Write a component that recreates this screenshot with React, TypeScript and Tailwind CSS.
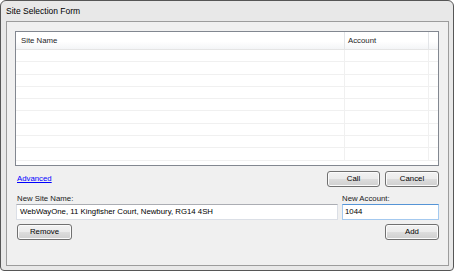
import React from "react";

const rows = Array.from({ length: 9 });

function Btn({ label, w }: { label: string; w: string }) {
  return (
    <button
      className={`${w} h-[16px] rounded-[3px] border border-[#707070] bg-[linear-gradient(#f2f2f2_0%,#ebebeb_50%,#dddddd_51%,#cfcfcf_100%)] shadow-[inset_0_0_0_1px_#fbfbfb] text-[7.8px] leading-[14px] text-black flex items-center justify-center`}
    >
      {label}
    </button>
  );
}

export default function App() {
  return (
    <div className="w-[454px] h-[271px] bg-white font-['Liberation_Sans',Arial,sans-serif]">
      <div className="w-[454px] h-[271px] flex flex-col border border-[#565656] rounded-t-[6px] rounded-b-[4px] bg-[#e8e8e8] overflow-hidden">
        <div className="h-[20px] flex items-center pl-[5px] text-[8.5px] text-black">
          Site Selection Form
        </div>
        <div className="flex-1 ml-[5px] mr-[4px] mb-[4px] border border-[#9c9c9c] bg-[#f0f0f0] flex flex-col">
          {/* List view */}
          <div className="mt-[9px] ml-[8px] w-[424px] h-[135px] border border-[#828790] bg-white flex flex-col overflow-hidden">
            <div className="h-[18px] shrink-0 flex border-b border-[#e5e5e5] bg-[linear-gradient(#ffffff_0%,#ffffff_55%,#f4f5f7_100%)] text-[7.8px] text-[#1e1e1e]">
              <div className="w-[329px] border-r border-[#e3e5e8] pl-[5px] flex items-center">Site Name</div>
              <div className="w-[84px] border-r border-[#e3e5e8] pl-[3px] flex items-center">Account</div>
              <div className="flex-1" />
            </div>
            {rows.map((_, i) => (
              <div key={i} className="h-[12.3px] shrink-0 flex border-b border-[#f0f0f0]">
                <div className="w-[329px] border-r border-[#f0f0f0]" />
                <div className="w-[84px] border-r border-[#f0f0f0]" />
                <div className="flex-1" />
              </div>
            ))}
          </div>

          {/* Advanced + Call/Cancel */}
          <div className="mt-[5px] ml-[8px] w-[424px] flex items-center">
            <a className="ml-[2px] text-[7.8px] text-[#0000ff] underline leading-[10px]">Advanced</a>
            <div className="ml-auto flex gap-[5px]">
              <Btn label="Call" w="w-[53px]" />
              <Btn label="Cancel" w="w-[54px]" />
            </div>
          </div>

          {/* Labels + inputs */}
          <div className="mt-[7px] ml-[9px] flex gap-[4px]">
            <div className="w-[322px] flex flex-col">
              <div className="h-[10px] leading-[10px] pl-[1px] text-[7.8px] text-[#1a1a1a]">New Site Name:</div>
              <div className="h-[16px] border border-[#dbdfe6] border-t-[#abadb3] bg-white pl-[3px] flex items-center text-[7.8px] text-black">
                WebWayOne, 11 Kingfisher Court, Newbury, RG14 4SH
              </div>
            </div>
            <div className="w-[97px] flex flex-col">
              <div className="h-[10px] leading-[10px] text-[7.8px] text-[#1a1a1a]">New Account:</div>
              <div className="h-[16px] border border-[#a4c9ef] border-t-[#5594d6] bg-white pl-[2px] flex items-center text-[7.8px] text-black">
                1044
              </div>
            </div>
          </div>

          {/* Remove / Add */}
          <div className="mt-[4px] ml-[10px] w-[422px] flex">
            <Btn label="Remove" w="w-[55px]" />
            <div className="ml-auto">
              <Btn label="Add" w="w-[54px]" />
            </div>
          </div>
        </div>
      </div>
    </div>
  );
}
